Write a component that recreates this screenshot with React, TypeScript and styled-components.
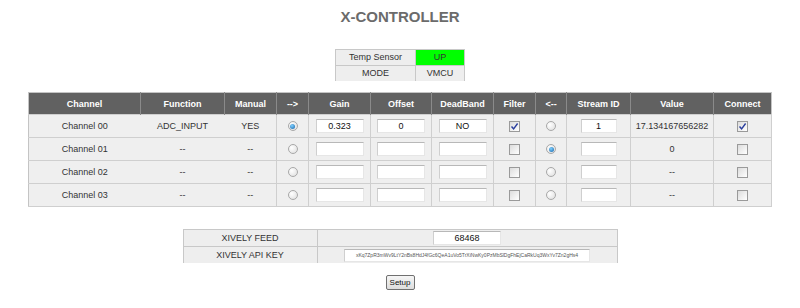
import React from "react";
import styled, { createGlobalStyle } from "styled-components";

const GlobalStyle = createGlobalStyle`
  html, body {
    margin: 0;
    padding: 0;
    background: #ffffff;
  }
  body {
    font-family: "Liberation Sans", Arial, sans-serif;
    font-size: 9px;
    color: #333333;
  }
`;

type Channel = {
  name: string;
  func: string;
  manual: string;
  out: boolean;
  gain: string;
  offset: string;
  deadband: string;
  filter: boolean;
  back: boolean;
  stream: string;
  value: string;
  connect: boolean;
};

const channels: Channel[] = [
  {
    name: "Channel 00",
    func: "ADC_INPUT",
    manual: "YES",
    out: true,
    gain: "0.323",
    offset: "0",
    deadband: "NO",
    filter: true,
    back: false,
    stream: "1",
    value: "17.134167656282",
    connect: true,
  },
  {
    name: "Channel 01",
    func: "--",
    manual: "--",
    out: false,
    gain: "",
    offset: "",
    deadband: "",
    filter: false,
    back: true,
    stream: "",
    value: "0",
    connect: false,
  },
  {
    name: "Channel 02",
    func: "--",
    manual: "--",
    out: false,
    gain: "",
    offset: "",
    deadband: "",
    filter: false,
    back: false,
    stream: "",
    value: "--",
    connect: false,
  },
  {
    name: "Channel 03",
    func: "--",
    manual: "--",
    out: false,
    gain: "",
    offset: "",
    deadband: "",
    filter: false,
    back: false,
    stream: "",
    value: "--",
    connect: false,
  },
];

const columns = [
  { label: "Channel", width: 112 },
  { label: "Function", width: 84 },
  { label: "Manual", width: 52 },
  { label: "-->", width: 32 },
  { label: "Gain", width: 62 },
  { label: "Offset", width: 61 },
  { label: "DeadBand", width: 62 },
  { label: "Filter", width: 42 },
  { label: "<--", width: 31 },
  { label: "Stream ID", width: 64 },
  { label: "Value", width: 83 },
  { label: "Connect", width: 58 },
];

// the key is shown very small in the page, as a grey hatch
const API_KEY =
  "xKq7ZpR3mWv9LtY2nBs8HdJ4fGc6QeA1uVo5TrXiNwKy0PzMbSlDgFhEjCaRkUq3WxYv7Zn2gHs4";

const Radio: React.FC<{ checked: boolean }> = ({ checked }) => (
  <RadioRing>{checked && <RadioDot />}</RadioRing>
);

const Check: React.FC<{ checked: boolean }> = ({ checked }) => (
  <CheckBox>
    {checked && (
      <svg width="9" height="9" viewBox="0 0 9 9">
        <path
          d="M1.5 4.5 L3.6 6.8 L7.6 1.5"
          fill="none"
          stroke="#2b3f9e"
          strokeWidth="1.4"
        />
      </svg>
    )}
  </CheckBox>
);

const App: React.FC = () => {
  return (
    <Page>
      <GlobalStyle />
      <Title>X-CONTROLLER</Title>

      <StatusTable>
        <tbody>
          <tr>
            <StatusCell $w={79}>Temp Sensor</StatusCell>
            <StatusCell $w={48} $bg="#00ff00">
              UP
            </StatusCell>
          </tr>
          <tr>
            <StatusCell $w={79}>MODE</StatusCell>
            <StatusCell $w={48}>VMCU</StatusCell>
          </tr>
        </tbody>
      </StatusTable>

      <MainTable>
        <colgroup>
          {columns.map((c) => (
            <col key={c.label} style={{ width: c.width }} />
          ))}
        </colgroup>
        <thead>
          <tr>
            {columns.map((c) => (
              <HeadCell key={c.label}>{c.label}</HeadCell>
            ))}
          </tr>
        </thead>
        <tbody>
          {channels.map((ch) => (
            <tr key={ch.name}>
              <TextCell>{ch.name}</TextCell>
              <TextCell>{ch.func}</TextCell>
              <TextCell>{ch.manual}</TextCell>
              <Cell>
                <Radio checked={ch.out} />
              </Cell>
              <Cell>
                <Field $w={46}>{ch.gain}</Field>
              </Cell>
              <Cell>
                <Field $w={46}>{ch.offset}</Field>
              </Cell>
              <Cell>
                <Field $w={46}>{ch.deadband}</Field>
              </Cell>
              <Cell>
                <Check checked={ch.filter} />
              </Cell>
              <Cell>
                <Radio checked={ch.back} />
              </Cell>
              <Cell>
                <Field $w={34}>{ch.stream}</Field>
              </Cell>
              <Cell>{ch.value}</Cell>
              <Cell>
                <Check checked={ch.connect} />
              </Cell>
            </tr>
          ))}
        </tbody>
      </MainTable>

      <FeedTable>
        <tbody>
          <tr>
            <FeedCell $w={133}>XIVELY FEED</FeedCell>
            <FeedCell $w={299}>
              <Field $w={66}>68468</Field>
            </FeedCell>
          </tr>
          <tr>
            <FeedCell $w={133}>XIVELY API KEY</FeedCell>
            <FeedCell $w={299}>
              <KeyField>{API_KEY}</KeyField>
            </FeedCell>
          </tr>
        </tbody>
      </FeedTable>

      <SetupButton>Setup</SetupButton>
    </Page>
  );
};

export default App;

const Page = styled.div`
  width: 800px;
  height: 308px;
  display: flex;
  flex-direction: column;
  align-items: center;
  padding-top: 8px;
  box-sizing: border-box;
  overflow: hidden;
`;

const Title = styled.h1`
  margin: 0;
  font-size: 15px;
  font-weight: bold;
  color: #6b6b6b;
  line-height: 17px;
`;

const StatusTable = styled.table`
  margin-top: 24px;
  border-collapse: collapse;
  table-layout: fixed;
`;

const StatusCell = styled.td<{ $w: number; $bg?: string }>`
  width: ${(p) => p.$w}px;
  height: 15px;
  padding: 0;
  text-align: center;
  background: ${(p) => p.$bg || "#eeeeee"};
  border: 1px solid #c8c8c8;
  border-bottom: none;
  color: #333333;
  line-height: 15px;
`;

const MainTable = styled.table`
  margin-top: 11px;
  width: 743px;
  border-collapse: collapse;
  table-layout: fixed;
  border: 1px solid #c4c4c4;
`;

const HeadCell = styled.th`
  height: 21px;
  padding: 0;
  background: #616161;
  color: #ffffff;
  font-weight: bold;
  text-align: center;
  border-left: 1px solid #8a8a8a;
  &:first-child {
    border-left: none;
  }
`;

const Cell = styled.td`
  height: 22px;
  padding: 0;
  background: #efefef;
  text-align: center;
  vertical-align: middle;
  border: 1px solid #cfcfcf;
  color: #333333;
`;

const TextCell = styled(Cell)`
  border-left: none;
  border-right: none;
`;

const Field = styled.div<{ $w: number }>`
  display: inline-block;
  vertical-align: middle;
  width: ${(p) => p.$w}px;
  height: 12px;
  line-height: 12px;
  background: #ffffff;
  border-top: 1px solid #b8b8b8;
  border-left: 1px solid #cfcfcf;
  border-right: 1px solid #e6e6e6;
  border-bottom: 1px solid #e6e6e6;
  font-size: 9px;
  color: #111111;
  text-align: center;
  overflow: hidden;
`;

const KeyField = styled.div`
  display: inline-block;
  vertical-align: middle;
  width: 242px;
  height: 11px;
  line-height: 11px;
  padding: 0 1px;
  background: #ffffff;
  border-top: 1px solid #b8b8b8;
  border-left: 1px solid #cfcfcf;
  border-right: 1px solid #e6e6e6;
  border-bottom: 1px solid #e6e6e6;
  font-size: 5px;
  color: #555555;
  white-space: nowrap;
  text-align: center;
`;

const RadioRing = styled.span`
  display: inline-flex;
  align-items: center;
  justify-content: center;
  vertical-align: middle;
  width: 8px;
  height: 8px;
  border-radius: 50%;
  border: 1px solid #a8a8a8;
  background: radial-gradient(circle at 35% 35%, #ffffff, #dcdcdc);
`;

const RadioDot = styled.span`
  width: 5px;
  height: 5px;
  border-radius: 50%;
  background: radial-gradient(circle at 40% 35%, #7fd0ff, #1462a8);
`;

const CheckBox = styled.span`
  display: inline-flex;
  align-items: center;
  justify-content: center;
  vertical-align: middle;
  width: 9px;
  height: 9px;
  border: 1px solid #9a9a9a;
  background: linear-gradient(135deg, #dcdcdc, #ffffff);
`;

const FeedTable = styled.table`
  margin-top: 22px;
  border-collapse: collapse;
  table-layout: fixed;
`;

const FeedCell = styled.td<{ $w: number }>`
  width: ${(p) => p.$w}px;
  height: 16px;
  padding: 0;
  background: #eeeeee;
  text-align: center;
  vertical-align: middle;
  border: 1px solid #c8c8c8;
  border-bottom: none;
  color: #333333;
`;

const SetupButton = styled.button`
  margin-top: 12px;
  width: 29px;
  height: 15px;
  padding: 0;
  font-family: "Liberation Sans", Arial, sans-serif;
  font-size: 8px;
  color: #111111;
  border: 1px solid #707070;
  border-radius: 2px;
  background: linear-gradient(#f6f6f6, #dddddd);
`;
